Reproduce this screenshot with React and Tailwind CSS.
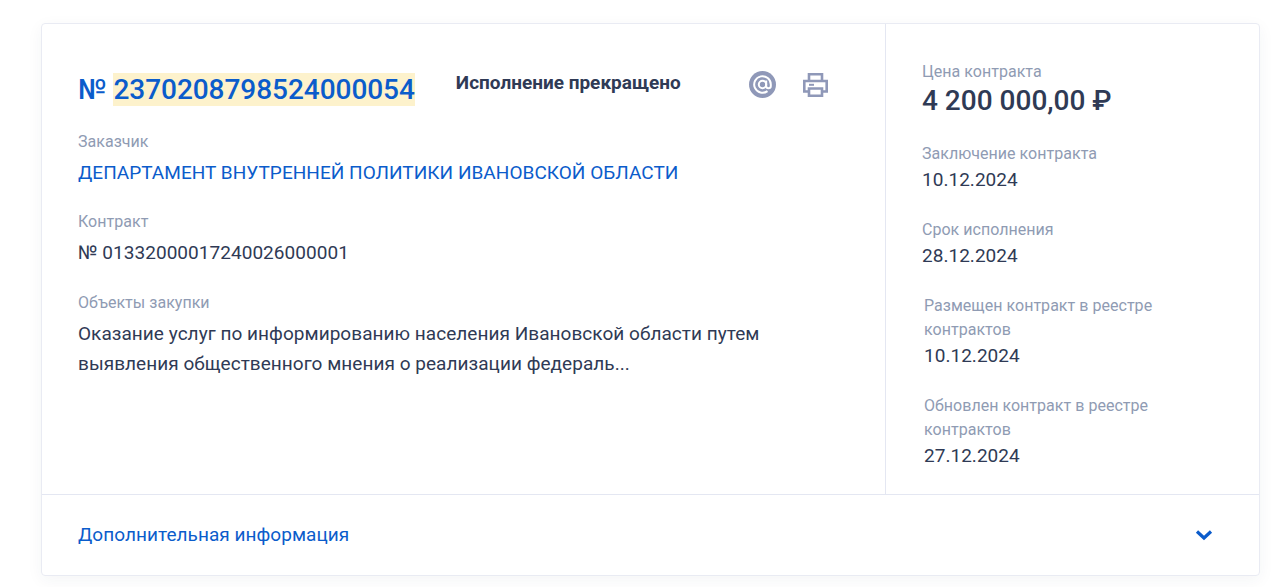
export default function App() {
  const Label = ({ children, className = "" }) => (
    <div className={"text-[16px] leading-[24px] tracking-[0.03px] text-[#8f9bb3] " + className}>{children}</div>
  );
  const Value = ({ children, className = "" }) => (
    <div className={"text-[19px] leading-[28px] tracking-[0.03px] text-[#2f3a55] " + className}>{children}</div>
  );
  return (
    <div className="h-[587px] w-[1280px] overflow-hidden bg-white pl-[41px] pt-[23px] font-['Roboto',sans-serif]">
      <div className="h-[553px] w-[1219px] rounded-[4px] border border-[#e9ebf3] shadow-[0_4px_16px_rgba(40,50,80,0.05)]">
        <div className="flex h-[471px] border-b border-[#e4e7f2]">
          <div className="w-[844px] border-r border-[#e4e7f2] pl-[36px]">
            <div className="flex h-[82px] items-end">
              <div className="text-[28px] font-medium leading-[33px] tracking-[-0.05px] text-[#0b5ccb]">
                № <span className="bg-[#fdf2cc]">2370208798524000054</span>
              </div>
              <div className="ml-[41px] pb-[10px] text-[19px] font-bold leading-[27px] text-[#2f3a55]">Исполнение прекращено</div>
              <svg className="ml-[68px] mb-[8px]" width="27" height="27" viewBox="0 0 27 27" fill="none">
                <circle cx="13.5" cy="13.5" r="13.5" fill="#8f98b8" />
                <circle cx="13.500" cy="13.500" r="3.700" stroke="#fff" strokeWidth="2" />
                <path d="M17.200 9.500v5.500a2.300 2.300 0 0 0 4.600 0v-1.500a8.300 8.300 0 1 0-3.300 6.600" stroke="#fff" strokeWidth="2" />
              </svg>
              <svg className="ml-[27px] mb-[9px]" width="25" height="24" viewBox="0 0 25 24" fill="none" stroke="#8f98b8" strokeWidth="2.600">
                <path d="M6 8V1.300h13V8" />
                <path d="M6 18.500H1.300V8h22.400v10.500H19" />
                <path d="M6 15.500h13v7.200H6z" />
                <path d="M6 11.800h5" strokeWidth="2" />
              </svg>
            </div>
            <Label className="mt-[24px]">Заказчик</Label>
            <div className="mt-[4px] text-[19px] leading-[30px] tracking-[0.04px] text-[#0b5ccb]">ДЕПАРТАМЕНТ ВНУТРЕННЕЙ ПОЛИТИКИ ИВАНОВСКОЙ ОБЛАСТИ</div>
            <Label className="mt-[22px]">Контракт</Label>
            <div className="mt-[4px] text-[19px] leading-[30px] tracking-[0.04px] text-[#2f3a55]">№ 01332000017240026000001</div>
            <Label className="mt-[23px]">Объекты закупки</Label>
            <div className="mt-[4px] w-[720px] text-[19px] leading-[29.500px] tracking-[0.04px] text-[#2f3a55]">
              Оказание услуг по информированию населения Ивановской области путем выявления общественного мнения о реализации федераль...
            </div>
          </div>
          <div className="flex-1 pl-[36px] pt-[36px]">
            <Label>Цена контракта</Label>
            <div className="text-[28px] font-medium leading-[34px] text-[#2f3a55]">4 200 000,00 ₽</div>
            <Label className="mt-[24px]">Заключение контракта</Label>
            <Value>10.12.2024</Value>
            <Label className="mt-[24px]">Срок исполнения</Label>
            <Value>28.12.2024</Value>
            <div className="pl-[2px]">
              <Label className="mt-[24px] w-[260px] leading-[23.500px]">Размещен контракт в реестре контрактов</Label>
              <Value>10.12.2024</Value>
              <Label className="mt-[24px] w-[260px] leading-[23.500px]">Обновлен контракт в реестре контрактов</Label>
              <Value>27.12.2024</Value>
            </div>
          </div>
        </div>
        <div className="flex h-[80px] items-center justify-between pl-[36px] pr-[46px]">
          <div className="text-[19px] leading-[30px] tracking-[0.04px] text-[#0b5ccb]">Дополнительная информация</div>
          <svg width="18" height="12" viewBox="0 0 18 12" fill="none" stroke="#0b5ccb" strokeWidth="3.200">
            <path d="M2 2.500l7 6.500 7-6.500" />
          </svg>
        </div>
      </div>
    </div>
  );
}
